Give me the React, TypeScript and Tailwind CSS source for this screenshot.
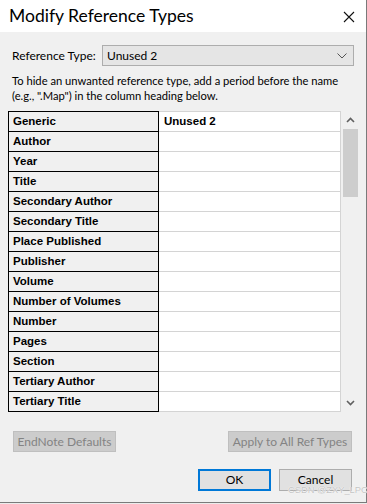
import React from "react";

const fields = [
  "Generic",
  "Author",
  "Year",
  "Title",
  "Secondary Author",
  "Secondary Title",
  "Place Published",
  "Publisher",
  "Volume",
  "Number of Volumes",
  "Number",
  "Pages",
  "Section",
  "Tertiary Author",
  "Tertiary Title",
];

const ui = { fontFamily: '"Segoe UI", Lato, "Noto Sans", sans-serif' };
const grid = { fontFamily: '"Liberation Sans", Arial, sans-serif' };

export default function App() {
  return (
    <div className="relative h-[504px] w-[367px] overflow-hidden bg-[#ececec]" style={ui}>
      <div className="flex h-[503px] w-[367px] flex-col border-b border-r border-[#7a7a7a] bg-[#f0f0f0]">
        {/* title bar */}
        <div className="flex h-[32px] shrink-0 items-center justify-between bg-white pl-[9px] pr-[11px]">
          <span className="text-[17.5px] leading-none text-black">Modify Reference Types</span>
          <svg width="12" height="12" viewBox="0 0 12 12" className="mt-[1px]">
            <path d="M1 1L11 11M11 1L1 11" stroke="#111" strokeWidth="1.1" />
          </svg>
        </div>

        <div className="flex flex-col px-[12px] pt-[13px] text-[12px]">
          <div className="flex items-center">
            <span className="w-[90px] text-black">Reference Type:</span>
            <div className="flex h-[21px] w-[252px] items-center justify-between border border-[#adadad] bg-[#e5e5e5] pl-[4px] pr-[6px]">
              <span className="text-black">Unused 2</span>
              <svg width="10" height="6" viewBox="0 0 10 6">
                <path d="M0.5 0.5L5 5L9.5 0.5" fill="none" stroke="#555" strokeWidth="1" />
              </svg>
            </div>
          </div>
          <p className="mt-[7px] whitespace-nowrap text-[11.2px] leading-[15px] text-black">
            To hide an unwanted reference type, add a period before the name
            <br />
            (e.g., ".Map") in the column heading below.
          </p>
        </div>

        {/* grid */}
        <div className="ml-[8px] mt-[8px] flex" style={grid}>
          <div className="flex w-[151px] flex-col border-t border-l border-black">
            {fields.map((f) => (
              <div
                key={f}
                className="flex h-[20px] items-center border-b border-r border-black bg-[#f0f0f0] pl-[4px] text-[11.5px] font-bold text-black"
              >
                {f}
              </div>
            ))}
          </div>
          <div className="flex w-[182px] flex-col border-t border-r border-[#d4d4d4] bg-white">
            {fields.map((f, i) => (
              <div
                key={f}
                className="flex h-[20px] items-center border-b border-[#d4d4d4] pl-[5px] text-[11.5px] font-bold text-black"
              >
                {i === 0 ? "Unused 2" : ""}
              </div>
            ))}
          </div>
          <div className="ml-[1px] flex w-[16px] flex-col items-center">
            <svg width="9" height="6" viewBox="0 0 9 6" className="mt-[6px]">
              <path d="M1 5L4.5 1.5L8 5" fill="none" stroke="#606060" strokeWidth="1.6" />
            </svg>
            <div className="mt-[6px] h-[68px] w-[15px] bg-[#cdcdcd]" />
            <div className="flex-1" />
            <svg width="9" height="6" viewBox="0 0 9 6" className="mb-[6px]">
              <path d="M1 1L4.5 4.5L8 1" fill="none" stroke="#606060" strokeWidth="1.6" />
            </svg>
          </div>
        </div>

        {/* buttons */}
        <div className="mt-[19px] flex justify-between pl-[13px] pr-[14px] text-[12px]">
          <div className="flex h-[21px] w-[103px] items-center justify-center border border-[#bfbfbf] bg-[#cccccc] text-[#838383]">
            EndNote Defaults
          </div>
          <div className="flex h-[21px] w-[124px] items-center justify-center border border-[#bfbfbf] bg-[#cccccc] text-[#838383]">
            Apply to All Ref Types
          </div>
        </div>
        <div className="mt-[17px] flex justify-end gap-[8px] pr-[14px] text-[12px]">
          <div className="flex h-[22px] w-[73px] items-center justify-center border-2 border-[#0078d7] bg-[#e1e1e1] text-black">
            OK
          </div>
          <div className="flex h-[22px] w-[73px] items-center justify-center border border-[#adadad] bg-[#e1e1e1] text-black">
            Cancel
          </div>
        </div>
      </div>
      <span
        className="absolute left-[288px] top-[486px] whitespace-nowrap text-[9.3px] leading-none text-[#c4c4c4]"
        style={{ fontFamily: '"Liberation Sans", sans-serif', textShadow: "0 0 1px #fff, 0 0 1px #fff" }}
      >
        CSDN @ZXY_LPC
      </span>
    </div>
  );
}
